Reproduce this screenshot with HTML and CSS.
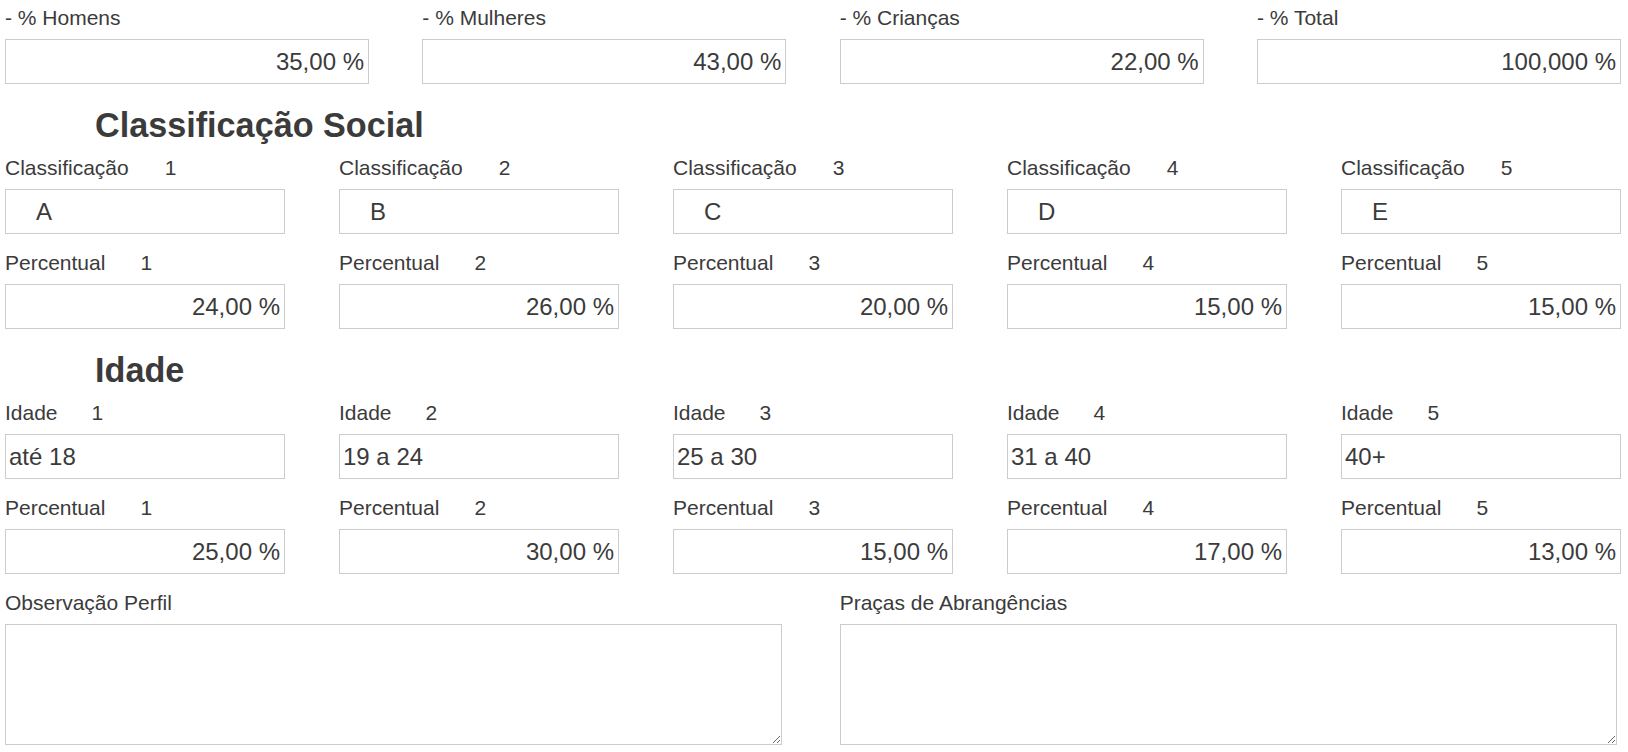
FILE: index.html
```html
<!DOCTYPE html>
<html lang="pt-BR">
<head>
<meta charset="utf-8">
<title>Perfil</title>
<link rel="stylesheet" href="styles.css">
</head>
<body>
<div class="form">
  <div class="grid g4">
    <div class="field"><label class="lbl">- % Homens</label><input class="inp right" value="35,00 %"></div>
    <div class="field"><label class="lbl">- % Mulheres</label><input class="inp right" value="43,00 %"></div>
    <div class="field"><label class="lbl">- % Crianças</label><input class="inp right" value="22,00 %"></div>
    <div class="field"><label class="lbl">- % Total</label><input class="inp right" value="100,000 %"></div>
  </div>

  <h2 class="section">Classificação Social</h2>
  <div class="grid g5">
    <div class="field"><label class="lbl">Classificação<span class="num n-cls">1</span></label><input class="inp indent" value="A"></div>
    <div class="field"><label class="lbl">Classificação<span class="num n-cls">2</span></label><input class="inp indent" value="B"></div>
    <div class="field"><label class="lbl">Classificação<span class="num n-cls">3</span></label><input class="inp indent" value="C"></div>
    <div class="field"><label class="lbl">Classificação<span class="num n-cls">4</span></label><input class="inp indent" value="D"></div>
    <div class="field"><label class="lbl">Classificação<span class="num n-cls">5</span></label><input class="inp indent" value="E"></div>
  </div>
  <div class="grid g5 row">
    <div class="field"><label class="lbl">Percentual<span class="num n-pct">1</span></label><input class="inp right" value="24,00 %"></div>
    <div class="field"><label class="lbl">Percentual<span class="num n-pct">2</span></label><input class="inp right" value="26,00 %"></div>
    <div class="field"><label class="lbl">Percentual<span class="num n-pct">3</span></label><input class="inp right" value="20,00 %"></div>
    <div class="field"><label class="lbl">Percentual<span class="num n-pct">4</span></label><input class="inp right" value="15,00 %"></div>
    <div class="field"><label class="lbl">Percentual<span class="num n-pct">5</span></label><input class="inp right" value="15,00 %"></div>
  </div>

  <h2 class="section">Idade</h2>
  <div class="grid g5">
    <div class="field"><label class="lbl">Idade<span class="num n-age">1</span></label><input class="inp" value="até 18"></div>
    <div class="field"><label class="lbl">Idade<span class="num n-age">2</span></label><input class="inp" value="19 a 24"></div>
    <div class="field"><label class="lbl">Idade<span class="num n-age">3</span></label><input class="inp" value="25 a 30"></div>
    <div class="field"><label class="lbl">Idade<span class="num n-age">4</span></label><input class="inp" value="31 a 40"></div>
    <div class="field"><label class="lbl">Idade<span class="num n-age">5</span></label><input class="inp" value="40+"></div>
  </div>
  <div class="grid g5 row">
    <div class="field"><label class="lbl">Percentual<span class="num n-pct">1</span></label><input class="inp right" value="25,00 %"></div>
    <div class="field"><label class="lbl">Percentual<span class="num n-pct">2</span></label><input class="inp right" value="30,00 %"></div>
    <div class="field"><label class="lbl">Percentual<span class="num n-pct">3</span></label><input class="inp right" value="15,00 %"></div>
    <div class="field"><label class="lbl">Percentual<span class="num n-pct">4</span></label><input class="inp right" value="17,00 %"></div>
    <div class="field"><label class="lbl">Percentual<span class="num n-pct">5</span></label><input class="inp right" value="13,00 %"></div>
  </div>

  <div class="grid g4 row">
    <div class="field span2"><label class="lbl">Observação Perfil</label><textarea class="area"></textarea></div>
    <div class="field span2"><label class="lbl">Praças de Abrangências</label><textarea class="area"></textarea></div>
  </div>
</div>
</body>
</html>
```

FILE: styles.css
```css
html, body {
  margin: 0;
  padding: 0;
  background: #ffffff;
}

body {
  font-family: "Liberation Sans", Arial, sans-serif;
  color: #3b3b3b;
}

.form {
  width: 1616px;
  padding: 3px 0 0 5px;
}

.grid {
  display: grid;
}

.g4 {
  grid-template-columns: repeat(4, 1fr);
  column-gap: 53.33px;
}

.g5 {
  grid-template-columns: repeat(5, 1fr);
  column-gap: 54px;
}

.row {
  margin-top: 14px;
}

.field {
  min-width: 0;
}

.span2 {
  grid-column: span 2;
}

.lbl {
  display: block;
  font-size: 21px;
  line-height: 30px;
  margin-bottom: 6px;
  white-space: nowrap;
}

.num {
  margin-left: 35px;
}

.n-cls {
  margin-left: 36px;
}

.n-pct {
  margin-left: 35px;
}

.n-age {
  margin-left: 34px;
}

.inp {
  display: block;
  box-sizing: border-box;
  width: 100%;
  height: 45px;
  margin: 0;
  padding: 0 4px 0 3px;
  border: 1px solid #cccccc;
  border-radius: 0;
  background: #ffffff;
  font-family: "Liberation Sans", Arial, sans-serif;
  font-size: 24px;
  color: #3b3b3b;
  outline: none;
}

.right {
  text-align: right;
}

.indent {
  padding-left: 30px;
}

.section {
  margin: 21px 0 6.6px 90px;
  font-size: 34.2px;
  font-weight: bold;
  line-height: 41.4px;
  color: #3b3b3b;
}

.area {
  display: block;
  box-sizing: border-box;
  width: calc(100% - 4px);
  height: 121px;
  margin: 0;
  padding: 4px;
  border: 1px solid #cccccc;
  border-radius: 0;
  background: #ffffff;
  font-family: "Liberation Sans", Arial, sans-serif;
  font-size: 20px;
  color: #3b3b3b;
  outline: none;
}
```
